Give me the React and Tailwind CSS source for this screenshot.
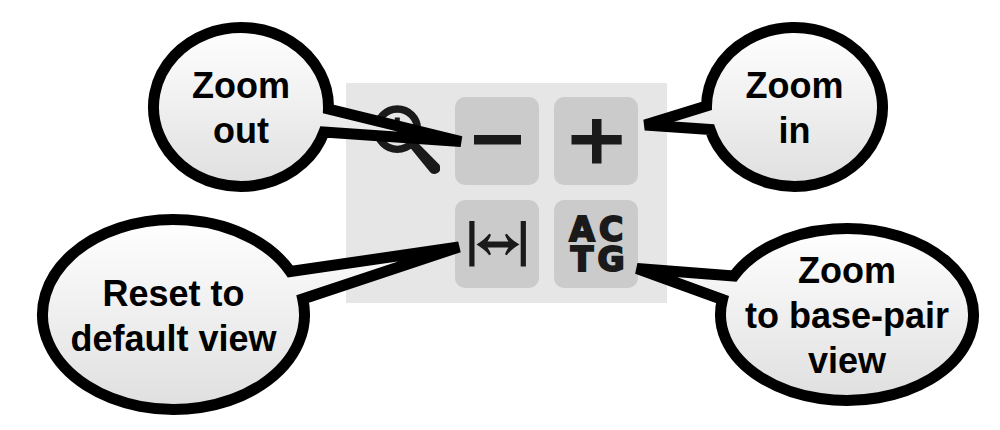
import React, { useId } from 'react';

const STROKE = 11;

// Speech bubble: an ellipse filling its box, with a tail that leaves the
// ellipse between two heights and ends at the tip.
function Callout({ place, width, height, side, tailTop, tailBottom, tip, lines }) {
  const gradient = useId();
  const rx = (width - STROKE) / 2;
  const ry = (height - STROKE) / 2;
  const dir = side === 'right' ? 1 : -1;
  const edge = (y) => width / 2 + dir * rx * Math.sqrt(1 - ((y - height / 2) / ry) ** 2);
  const sweep = side === 'right' ? 0 : 1;
  const d = [
    `M${tip[0]} ${tip[1]}`,
    `L${edge(tailTop)} ${tailTop}`,
    `A${rx} ${ry} 0 1 ${sweep} ${edge(tailBottom)} ${tailBottom}`,
    'Z',
  ].join(' ');

  return (
    <div
      className={`pointer-events-none absolute flex items-center justify-center ${place}`}
      style={{ width, height }}
    >
      <svg
        className="absolute inset-0 h-full w-full overflow-visible"
        viewBox={`0 0 ${width} ${height}`}
        aria-hidden="true"
      >
        <defs>
          <linearGradient id={gradient} x1="0" y1="0" x2="0" y2="1">
            <stop offset="0" stopColor="#ffffff" />
            <stop offset="1" stopColor="#dfdfdf" />
          </linearGradient>
        </defs>
        <path d={d} fill={`url(#${gradient})`} stroke="#000" strokeWidth={STROKE} />
      </svg>
      <p className="relative whitespace-nowrap pt-[2px] text-center text-4xl leading-[45px] font-bold text-black">
        {lines.map((line) => (
          <span key={line} className="block">
            {line}
          </span>
        ))}
      </p>
    </div>
  );
}

function ToolButton({ label, children }) {
  return (
    <button
      type="button"
      aria-label={label}
      className="flex h-[88px] w-[84px] items-center justify-center rounded-[10px] bg-[#cbcbcb] text-[#1a1a1a]"
    >
      {children}
    </button>
  );
}

function Icon({ children }) {
  return (
    <svg width="84" height="88" viewBox="0 0 84 88" fill="currentColor" aria-hidden="true">
      {children}
    </svg>
  );
}

export default function App() {
  return (
    <main className="flex min-h-screen items-start justify-center overflow-hidden bg-white pt-[83px] pl-[13px] font-['Liberation_Sans',Arial,sans-serif]">
      <section className="relative grid shrink-0 grid-cols-[repeat(3,84px)] gap-[15px] bg-[#e6e6e6] pt-[14px] pr-[29px] pb-[15px] pl-[10px]">
        <div className="text-[#1a1a1a]">
          <Icon>
            <circle cx="41.3" cy="32.2" r="20.2" fill="none" stroke="currentColor" strokeWidth="7.4" />
            <path d="M38.8 20.5h5v9.5h9v5h-9v9h-5v-9h-9v-5h9z" />
            <path d="M54 50.5L61 45L83 67.3A5.7 5.7 0 0 1 74 74.9Z" />
          </Icon>
        </div>
        <ToolButton label="Zoom out">
          <Icon>
            <rect x="19" y="38" width="47" height="9.5" />
          </Icon>
        </ToolButton>
        <ToolButton label="Zoom in">
          <Icon>
            <path d="M38 22h9.5v16H67.7v9.5H47.5v19H38v-19H17.5V38H38z" />
          </Icon>
        </ToolButton>
        <div className="col-start-2">
          <ToolButton label="Reset to default view">
            <Icon>
              <rect x="14.3" y="21" width="5.2" height="45.5" />
              <rect x="65.7" y="21" width="5.2" height="45.5" />
              <path d="M21.5 44.5C26 42 31 38 34.2 33.8L36 34.8C34.8 38 33.5 40 32.5 41.5H53.5C52.5 40 51.2 38 50 34.8L51.8 33.8C55 38 60 42 64.5 44.5C60 47 55 51 51.8 55.2L50 54.2C51.2 51 52.5 49 53.5 47.5H32.5C33.5 49 34.8 51 36 54.2L34.2 55.2C31 51 26 47 21.5 44.5Z" />
            </Icon>
          </ToolButton>
        </div>
        <ToolButton label="Zoom to base-pair view">
          <span className="grid grid-cols-[30px_28px] pt-[2px] text-center font-['DejaVu_Sans',sans-serif] text-[33px] leading-[30px] font-bold [-webkit-text-stroke:2px_#1a1a1a]">
            <span>A</span>
            <span>C</span>
            <span>T</span>
            <span>G</span>
          </span>
        </ToolButton>

        <Callout
          place="-left-[198px] -top-[61px]"
          width={186}
          height={170}
          side="right"
          tailTop={87}
          tailBottom={110}
          tip={[313, 119.5]}
          lines={['Zoom', 'out']}
        />
        <Callout
          place="left-[355px] -top-[61px]"
          width={187}
          height={170}
          side="left"
          tailTop={84}
          tailBottom={107.5}
          tip={[-56, 103]}
          lines={['Zoom', 'in']}
        />
        <Callout
          place="-left-[309px] top-[131px]"
          width={273}
          height={201}
          side="right"
          tailTop={57.5}
          tailBottom={85}
          tip={[422, 33]}
          lines={['Reset to', 'default view']}
        />
        <Callout
          place="left-[369px] top-[140px]"
          width={264}
          height={183}
          side="left"
          tailTop={53}
          tailBottom={76.5}
          tip={[-78, 45.5]}
          lines={['Zoom', 'to base-pair', 'view']}
        />
      </section>
    </main>
  );
}
